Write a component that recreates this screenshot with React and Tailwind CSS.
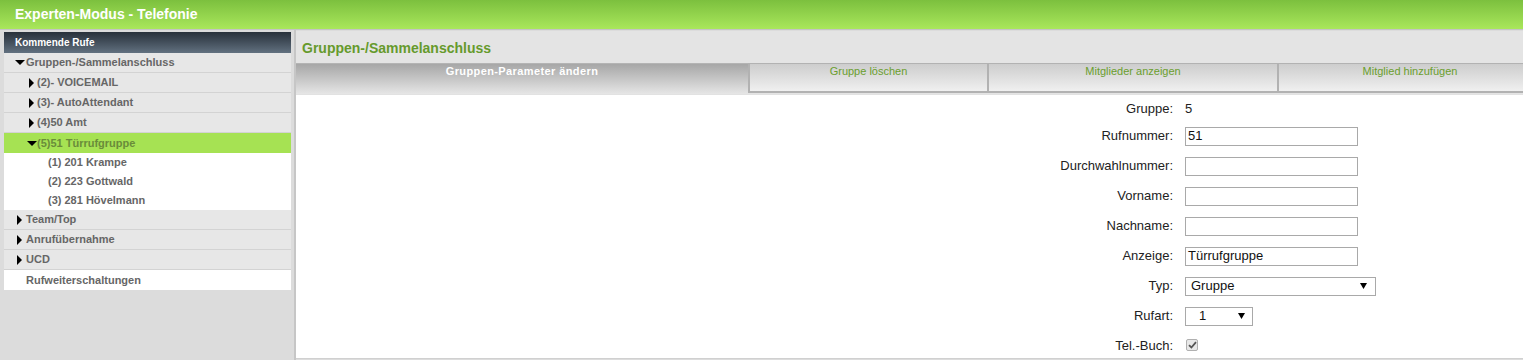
import React from 'react';

function Down({ className }) {
  return (
    <svg width="10" height="5" viewBox="0 0 10 5" className={className}>
      <polygon points="0,0 10,0 5,5" fill="#000" />
    </svg>
  );
}

function Right({ className }) {
  return (
    <svg width="5" height="10" viewBox="0 0 5 10" className={className}>
      <polygon points="0,0 5,5 0,10" fill="#000" />
    </svg>
  );
}

function Caret() {
  return (
    <svg width="7" height="6" viewBox="0 0 7 6">
      <polygon points="0,0 7,0 3.5,6" fill="#000" />
    </svg>
  );
}

const navRow = 'h-[20px] flex items-center bg-[#e7e7e7] border-b border-[#d3d3d3] text-[11px] font-bold text-[#666666]';

function Sidebar() {
  return (
    <aside className="w-[296px] shrink-0 h-[330px] pt-[2px] pl-[4px] pr-[3px] border-r-2 border-[#c6c6c6] bg-[#dcdcdc]">
      <div className="h-[21px] flex items-center pl-[11px] bg-gradient-to-b from-[#28313b] to-[#627180] text-white text-[10px] font-bold">
        Kommende Rufe
      </div>
      <div className={navRow + ' pl-[11px]'}>
        <Down />
        <span className="ml-[1px]">Gruppen-/Sammelanschluss</span>
      </div>
      {['(2)- VOICEMAIL', '(3)- AutoAttendant', '(4)50 Amt'].map((item) => (
        <div key={item} className={navRow + ' pl-[25px]'}>
          <Right />
          <span className="ml-[3px]">{item}</span>
        </div>
      ))}
      <div className="h-[20px] flex items-center pl-[23px] bg-[#a6e253] text-[11px] font-bold text-[#6a8c3a]">
        <Down />
        <span>(5)51 Türrufgruppe</span>
      </div>
      <div className="bg-white">
        {['(1) 201 Krampe', '(2) 223 Gottwald', '(3) 281 Hövelmann'].map((m) => (
          <div key={m} className="h-[19px] flex items-center pl-[44px] text-[11px] font-bold text-[#666666]">
            {m}
          </div>
        ))}
      </div>
      {['Team/Top', 'Anrufübernahme', 'UCD'].map((item) => (
        <div key={item} className={navRow + ' pl-[13px]'}>
          <Right />
          <span className="ml-[4px]">{item}</span>
        </div>
      ))}
      <div className="h-[20px] flex items-center pl-[22px] bg-white text-[11px] font-bold text-[#666666]">
        Rufweiterschaltungen
      </div>
    </aside>
  );
}

const tabs = [
  { label: 'Gruppen-Parameter ändern', w: 'w-[452px]', active: true },
  { label: 'Gruppe löschen', w: 'w-[239px]' },
  { label: 'Mitglieder anzeigen', w: 'w-[290px]' },
  { label: 'Mitglied hinzufügen', w: 'w-[264px]' },
];

function FormRow({ label, children, className = '' }) {
  return (
    <div className={'h-[20px] flex items-center ' + className}>
      <div className="w-[877px] text-right text-[13px] text-[#222222]">{label}</div>
      <div className="ml-[12px] flex items-center">{children}</div>
    </div>
  );
}

function TextInput({ value }) {
  return (
    <div className="w-[173px] h-[19px] border border-[#a9a9a9] bg-white pl-[2px] flex items-center text-[13px] text-[#111111]">
      {value}
    </div>
  );
}

function Main() {
  return (
    <main className="w-[1245px] shrink-0 pt-[1px]">
      <div className="h-[32px] bg-[#e4e4e4] flex items-center pl-[6px] pt-[2px] text-[14px] font-bold text-[#669a2c]">
        Gruppen-/Sammelanschluss
      </div>
      <div className="flex h-[31px] bg-[#e4e4e4]">
        {tabs.map((t) =>
          t.active ? (
            <div
              key={t.label}
              className={t.w + ' shrink-0 h-[31px] border-t border-[#b4b4b4] bg-gradient-to-b from-[#a7a7a7] to-[#e6e6e6] text-center pt-[1px] leading-[13px] text-[11px] font-bold tracking-[0.4px] text-white'}
            >
              {t.label}
            </div>
          ) : (
            <div
              key={t.label}
              className={t.w + ' shrink-0 h-[30px] border-t border-l-2 border-b-2 border-[#b2b2b2] bg-gradient-to-b from-[#cdcdcd] to-[#f0f0f0] text-center pt-[1px] leading-[13px] text-[11px] text-[#6a9e2e]'}
            >
              {t.label}
            </div>
          )
        )}
      </div>
      <div className="h-[265px] bg-white border-t border-[#e2e2e2] border-b border-b-[#d0d0d0] pt-[1px] flex flex-col gap-[10px]">
        <FormRow label="Gruppe:" className="mt-[3px] mb-[-3px]">
          <span className="text-[13px] text-[#222222]">5</span>
        </FormRow>
        <FormRow label="Rufnummer:">
          <TextInput value="51" />
        </FormRow>
        <FormRow label="Durchwahlnummer:">
          <TextInput value="" />
        </FormRow>
        <FormRow label="Vorname:">
          <TextInput value="" />
        </FormRow>
        <FormRow label="Nachname:">
          <TextInput value="" />
        </FormRow>
        <FormRow label="Anzeige:">
          <TextInput value="Türrufgruppe" />
        </FormRow>
        <FormRow label="Typ:">
          <div className="w-[191px] h-[19px] border border-[#a9a9a9] bg-white pl-[5px] pr-[8px] flex items-center justify-between text-[13px] text-[#111111]">
            <span>Gruppe</span>
            <Caret />
          </div>
        </FormRow>
        <FormRow label="Rufart:">
          <div className="w-[68px] h-[19px] border border-[#a9a9a9] bg-white pl-[13px] pr-[7px] flex items-center justify-between text-[13px] text-[#111111]">
            <span>1</span>
            <Caret />
          </div>
        </FormRow>
        <FormRow label="Tel.-Buch:">
          <div className="w-[12px] h-[12px] mt-[-3px] ml-[1px] rounded-[2px] border border-[#b0b0b0] bg-[#e8e8e8] flex items-center justify-center">
            <svg width="9" height="8" viewBox="0 0 9 8">
              <path d="M1 4.2 L3.4 6.5 L8 1.2" fill="none" stroke="#555555" strokeWidth="1.8" />
            </svg>
          </div>
        </FormRow>
      </div>
    </main>
  );
}

export default function App() {
  return (
    <div className="w-[1523px] h-[360px] overflow-hidden bg-[#dcdcdc] font-['Liberation_Sans',Arial,sans-serif]">
      <header className="h-[30px] border-b border-[#c4c4c4] bg-gradient-to-b from-[#7cc03e] to-[#a9e75b] flex items-center pl-[15px] text-white text-[14px] font-bold">
        Experten-Modus - Telefonie
      </header>
      <div className="flex items-start">
        <Sidebar />
        <Main />
      </div>
    </div>
  );
}
